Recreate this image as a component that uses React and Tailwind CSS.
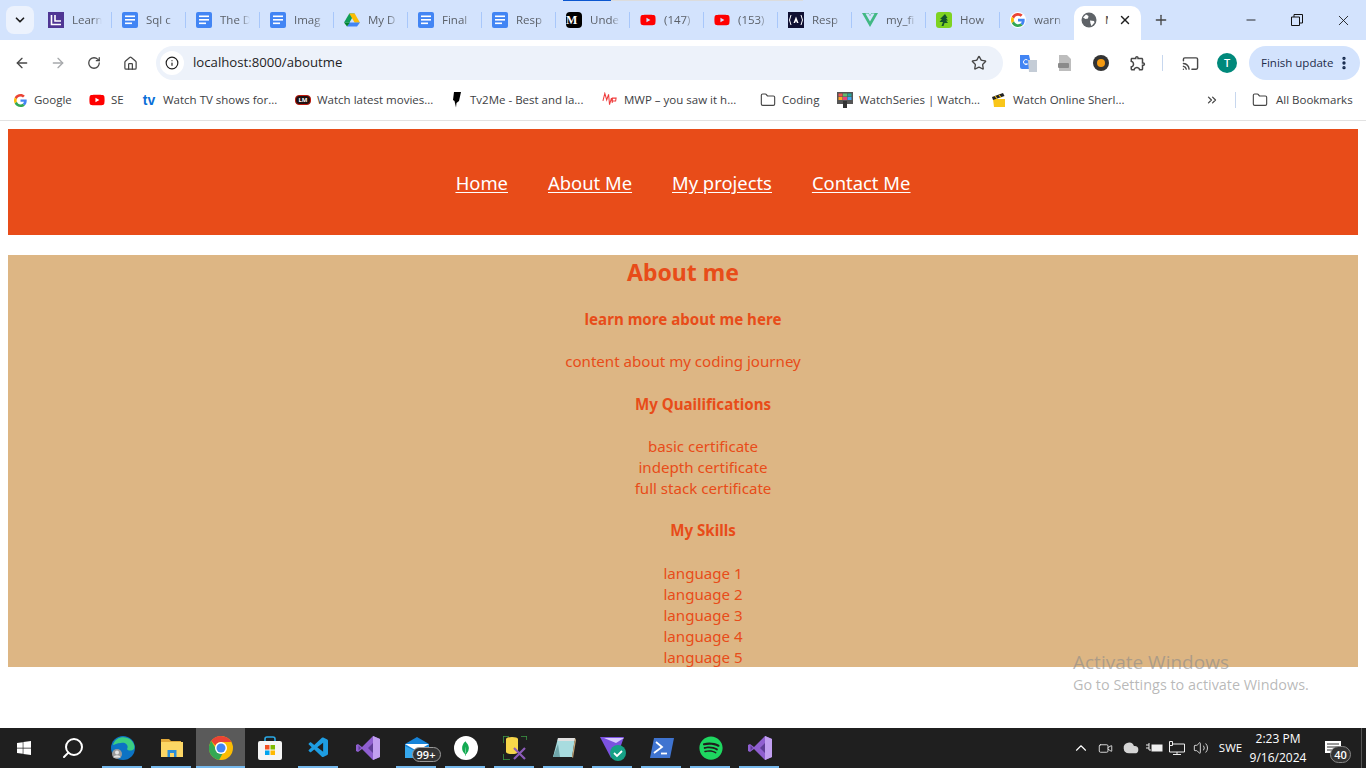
import React from "react";
import { ArrowLeft, ArrowRight, RotateCw, Home, Info, Star, Cast, X, Plus, Minus, ChevronDown, ChevronsRight, ChevronUp, Folder, MoreVertical, Search, Volume2, Video, Cloud } from "lucide-react";
import { FaYoutube, FaWindows, FaSpotify } from "react-icons/fa";
import { SiVuedotjs, SiMongodb } from "react-icons/si";
import { VscVscode } from "react-icons/vsc";

const ui = { fontFamily: '"Open Sans","Noto Sans",sans-serif' };
const page = { fontFamily: '"Noto Sans","Open Sans",sans-serif' };

const G = ({ s = 16 }) => (
  <svg width={s} height={s} viewBox="0 0 48 48" className="shrink-0">
    <path fill="#EA4335" d="M24 9.5c3.5 0 6.6 1.2 9.1 3.600l6.800-6.800C35.800 2.400 30.300 0 24 0 14.600 0 6.500 5.400 2.600 13.200l7.900 6.100C12.400 13.700 17.700 9.500 24 9.500z" />
    <path fill="#4285F4" d="M46.900 24.500c0-1.600-.1-3.100-.4-4.500H24v9h12.900c-.6 3-2.200 5.500-4.700 7.200l7.600 5.900c4.400-4.100 7.100-10.100 7.100-17.600z" />
    <path fill="#FBBC05" d="M10.500 28.700c-.5-1.400-.8-3-.8-4.700s.3-3.200.8-4.700l-7.900-6.100C.9 16.500 0 20.100 0 24s.9 7.500 2.600 10.800l7.900-6.100z" />
    <path fill="#34A853" d="M24 48c6.500 0 11.900-2.100 15.900-5.800l-7.600-5.900c-2.200 1.500-5 2.300-8.200 2.300-6.300 0-11.600-4.200-13.500-9.900l-7.900 6.100C6.500 42.600 14.600 48 24 48z" />
  </svg>
);
const Doc = () => (
  <svg width="16" height="16" viewBox="0 0 16 16" className="shrink-0">
    <rect width="16" height="16" rx="2" fill="#4285f4" />
    <rect x="3" y="3.500" width="10" height="1.600" fill="#fff" />
    <rect x="3" y="7" width="10" height="1.600" fill="#fff" />
    <rect x="3" y="10.500" width="7" height="1.600" fill="#fff" />
  </svg>
);
const Learn = () => (
  <svg width="16" height="16" viewBox="0 0 16 16" className="shrink-0">
    <rect width="16" height="16" fill="#4f3694" />
    <path d="M3.500 3v9.500H13M7 3v6h6" fill="none" stroke="#fff" strokeWidth="1.600" />
  </svg>
);
const Drive = () => (
  <svg width="16" height="16" viewBox="0 0 16 16" className="shrink-0">
    <path d="M5.300 1.500h5.400L5.500 10.500H0z" fill="#0f9d58" />
    <path d="M5.300 1.500h5.400l5.300 9.200h-5.300z" fill="#fbbc04" />
    <path d="M3 14.500h10l3-4H5.500z" fill="#4285f4" />
    <path d="M0 10.500l3 4 3-4z" fill="#00832d" />
  </svg>
);
const Medium = () => (
  <div className="w-4 h-4 shrink-0 rounded-sm bg-black text-white text-[12px] font-bold leading-4 overflow-hidden" style={{ fontFamily: '"Liberation Serif",serif' }}>M</div>
);
const Yt = () => <FaYoutube size={16} color="#ff0000" className="shrink-0" />;
const Auth = () => (
  <svg width="16" height="16" viewBox="0 0 16 16" className="shrink-0">
    <rect width="16" height="16" fill="#0f1033" />
    <path d="M3 3 1.500 8 3 13M13 3l1.500 5L13 13" fill="none" stroke="#fff" />
    <path d="M8 4.500 5.500 11h1.500L8 9l1 2h1.500z" fill="#fff" />
  </svg>
);
const Tree = () => (
  <svg width="16" height="16" viewBox="0 0 16 16" className="shrink-0">
    <rect width="16" height="16" rx="3" fill="#7ed321" />
    <path d="M9 2 4 7h2L3.500 10H7l-1.500 4h2l1-3h3.500l-2-2.500h2L10 6h1.500z" fill="#14532d" />
  </svg>
);
const Vue = () => <SiVuedotjs size={16} color="#41b883" className="shrink-0" />;
const GlobeIcon = () => (
  <svg width="16" height="16" viewBox="0 0 16 16" className="shrink-0">
    <circle cx="8" cy="8" r="7.500" fill="#5f6368" />
    <path d="M5 2.500 7.500 4 7 6.500 4.500 7 2 5.500zM9 8.500l4 .5.500 1.500-3 3.500-1-2.500z" fill="#fff" />
  </svg>
);

const tabs = [
  [Learn, "Learn"],
  [Doc, "Sql c"],
  [Doc, "The D"],
  [Doc, "Imag"],
  [Drive, "My D"],
  [Doc, "Final"],
  [Doc, "Resp"],
  [Medium, "Unde"],
  [Yt, "(147)"],
  [Yt, "(153)"],
  [Auth, "Resp"],
  [Vue, "my_fi"],
  [Tree, "How"],
  [() => <div className="w-4 h-4 shrink-0 rounded-full bg-white flex items-center justify-center"><G s={14} /></div>, "warn"],
];

const Tab = ({ Icon, label, last }) => (
  <div className="w-[74px] h-8 pl-2 flex items-center shrink-0 relative">
    <Icon />
    <span className="ml-2 w-[30px] overflow-hidden whitespace-nowrap text-[11.500px] text-[#5b6068]" style={{ maskImage: "linear-gradient(90deg,#000 70%,transparent)" }}>{label}</span>
    {!last && <div className="absolute right-[2px] top-[8px] w-[1px] h-[16px] bg-[#a8c7fa]" />}
  </div>
);

const Bm = ({ icon, label, w, wide }) => (
  <div className="flex items-center shrink-0 text-[11.500px] text-[#3c4043] whitespace-nowrap" style={{ width: w }}>
    <span className={`w-4 h-4 flex items-center justify-center shrink-0 ${wide ? "mr-2" : "mr-[6px]"}`}>{icon}</span>
    <span>{label}</span>
  </div>
);

const Tv = () => <span className="text-[#0a6fd8] font-black text-[14px] leading-4" style={{ fontFamily: '"Liberation Sans",sans-serif' }}>tv</span>;
const Lm = () => <span className="bg-[#201010] border border-[#c0180c] text-white text-[6px] font-bold px-[2px] rounded-sm leading-[8px]">LM</span>;
const Tv2 = () => <svg width="10" height="16" viewBox="0 0 10 16"><path d="M3 0h7L8 9 5.500 11 5 15.500 3.500 9 2 8z" fill="#000" /></svg>;
const Mwp = () => <svg width="17" height="16" viewBox="0 0 17 16"><path d="M1 9 3 1l2 7 2-6 1 11 2-7 1 5V6h4l-.5 3h-3" fill="none" stroke="#ef3b3b" strokeWidth="1.100" /></svg>;
const Ws = () => (
  <svg width="16" height="16" viewBox="0 0 16 16">
    <rect width="16" height="12" fill="#555" />
    <rect x="1.500" y="1.500" width="4" height="3" fill="#ef5350" />
    <rect x="6" y="1.500" width="4" height="3" fill="#66bb6a" />
    <rect x="10.500" y="1.500" width="4" height="3" fill="#26a69a" />
    <rect x="1.500" y="5" width="4" height="3" fill="#ffa726" />
    <rect x="6" y="5" width="4" height="3" fill="#ec407a" />
    <rect x="10.500" y="5" width="4" height="3" fill="#42a5f5" />
    <rect x="6" y="9" width="4" height="7" fill="#333" />
  </svg>
);
const Clap = () => (
  <svg width="14" height="15" viewBox="0 0 14 15">
    <path d="M1 6h12v8H2z" fill="#f9c61a" />
    <path d="M0 4 11 0l1.500 3L1 7z" fill="#222" />
    <path d="M3 3l2 2.500M7 2l2 2.500" stroke="#f9c61a" strokeWidth="1.200" />
  </svg>
);
const Ext = () => (
  <svg width="18" height="18" viewBox="0 0 24 24" className="shrink-0">
    <path fill="#474747" d="M10.500 4.500c.28 0 .5.22.5.5v2h6v6h2c.28 0 .5.22.5.5s-.22.5-.5.5h-2v6h-2.120c-.68-1.750-2.390-3-4.380-3s-3.700 1.250-4.380 3H4v-2.120c1.750-.68 3-2.390 3-4.380 0-1.990-1.240-3.700-2.990-4.380L4 7h6V5c0-.28.22-.5.5-.5m0-2C9.120 2.500 8 3.620 8 5H4c-1.100 0-1.990.9-1.990 2v3.800h.29c1.490 0 2.700 1.210 2.700 2.700s-1.210 2.700-2.700 2.700H2V20c0 1.100.9 2 2 2h3.800v-.3c0-1.490 1.210-2.700 2.700-2.700s2.700 1.210 2.700 2.700v.3H17c1.100 0 2-.9 2-2v-4c1.380 0 2.500-1.120 2.500-2.500S20.380 11 19 11V7c0-1.100-.9-2-2-2h-4c0-1.380-1.120-2.500-2.500-2.500z" />
  </svg>
);

const Task = ({ children, line, active }) => (
  <div className={`w-[49px] h-10 relative flex items-center justify-center shrink-0 ${active ? "bg-[#5a5a5a]" : ""}`}>
    {children}
    {line && <div className={`absolute bottom-0 h-[2px] bg-[#76b9ed] ${active ? "left-0 right-0" : "left-[4px] right-[5px]"}`} />}
  </div>
);

const Edge = () => (
  <svg width="24" height="24" viewBox="0 0 24 24">
    <circle cx="12" cy="12" r="12" fill="#0c73c4" />
    <path d="M2 9C4 1 14-1 20 4c3 3 4 6 3 9-2 2-6 2-7 0 2-3-1-7-6-6C6 7 3 9 2 9z" fill="#3bcf82" />
    <circle cx="6" cy="18" r="5" fill="#9a9a9a" />
    <circle cx="6" cy="16.500" r="2" fill="#e5e5e5" />
    <path d="M2.500 21.500c.5-3 6.500-3 7 0z" fill="#e5e5e5" />
  </svg>
);
const Files = () => (
  <svg width="22" height="20" viewBox="0 0 22 20">
    <path d="M0 1h8l2 2h10v15H0z" fill="#e2a93a" />
    <rect y="4" width="22" height="15" fill="#fcd665" />
    <rect x="6.500" y="12" width="9" height="7" fill="#2c8fd9" />
    <rect x="9" y="15" width="4" height="4" fill="#fcd665" />
  </svg>
);
const Chrome = () => (
  <svg width="24" height="24" viewBox="0 0 24 24">
    <circle cx="12" cy="12" r="12" fill="#fbbc04" />
    <path d="M12 0a12 12 0 0 1 10.400 6H12a6 6 0 0 0-5.500 3.600L2.200 5A12 12 0 0 1 12 0z" fill="#ea4335" />
    <path d="M2.200 5 8 14.500a6 6 0 0 0 5.500 3.300L10 24A12 12 0 0 1 2.200 5z" fill="#34a853" />
    <circle cx="12" cy="12" r="6" fill="#fff" />
    <circle cx="12" cy="12" r="4.500" fill="#4285f4" />
  </svg>
);
const Store = () => (
  <svg width="24" height="24" viewBox="0 0 24 24">
    <path d="M7 6V3a2 2 0 0 1 2-2h6a2 2 0 0 1 2 2v3" fill="none" stroke="#2aa9e6" strokeWidth="1.600" />
    <rect y="5" width="24" height="19" rx="2" fill="#f5f5f5" />
    <rect x="7" y="9" width="4.500" height="4.500" fill="#f25022" />
    <rect x="12.500" y="9" width="4.500" height="4.500" fill="#7fba00" />
    <rect x="7" y="14.500" width="4.500" height="4.500" fill="#00a4ef" />
    <rect x="12.500" y="14.500" width="4.500" height="4.500" fill="#ffb900" />
  </svg>
);
const Vs = () => (
  <svg width="24" height="24" viewBox="0 0 24 24">
    <path d="M17 0l7 3v18l-7 3L6 13l-4 3-2-1V9l2-1 4 3z" fill="#8f5fd0" />
    <path d="M17 0l7 3v18l-7 3z" fill="#c19ff0" />
    <path d="M17 7l-5 5 5 5zM2.500 9.500v5L5 12z" fill="#5e3d96" />
  </svg>
);
const Mail = () => (
  <div className="relative w-6 h-6">
    <svg width="24" height="24" viewBox="0 0 24 24">
      <path d="M0 8 12 1l12 7v14H0z" fill="#1683d8" />
      <path d="M0 8h24l-12 7z" fill="#fff" />
      <path d="M0 10l12 6 12-6v12H0z" fill="#36a8ee" />
    </svg>
    <div className="absolute left-[7px] top-[11px] w-[29px] h-[15px] rounded-full bg-[#333] border border-[#9a9a9a] text-white text-[11px] font-semibold leading-[13px] text-center">99+</div>
  </div>
);
const Mongo = () => (
  <div className="w-6 h-6 rounded-full bg-white flex items-center justify-center"><SiMongodb size={15} color="#13aa52" /></div>
);
const Db = () => (
  <svg width="24" height="24" viewBox="0 0 24 24">
    <path d="M0 7V0h6M18 0h6v4M0 18v6h7" fill="none" stroke="#3c9a45" strokeWidth="1.500" />
    <path d="M3 3a6 2 0 0 1 12 0v13a6 2 0 0 1-12 0z" fill="#f7d64a" />
    <path d="M11 12l11 11M22 12 11 23" stroke="#8c5bb8" strokeWidth="2.200" />
  </svg>
);
const Note = () => (
  <svg width="24" height="24" viewBox="0 0 24 24">
    <path d="M6 2h17l-3 19H1z" fill="#a8dcdf" />
    <path d="M6 2h17l-.500 3H5.500z" fill="#e0e0e0" />
    <path d="M20 21l3-19 1 2-3 18z" fill="#c8a878" />
    <path d="M1 21 6 8l2 13z" fill="#6fa6aa" />
  </svg>
);
const Prism = () => (
  <svg width="26" height="26" viewBox="0 0 26 26">
    <path d="M0 2h24L19 16 11 23z" fill="#7b52e0" />
    <path d="M4 3h20l-8 5z" fill="#d6c8ff" />
    <circle cx="18" cy="18" r="8" fill="#16a085" />
    <path d="M14 18l3 3 5-5" fill="none" stroke="#fff" strokeWidth="1.800" />
  </svg>
);
const Ps = () => (
  <svg width="24" height="20" viewBox="0 0 24 20">
    <path d="M4 0h20l-4 20H0z" fill="#3f74d0" />
    <path d="M6 4l6 5-8 6" fill="none" stroke="#fff" strokeWidth="1.800" />
    <path d="M11 15.500h6" stroke="#fff" strokeWidth="1.800" />
  </svg>
);

const Tray = ({ children, cls }) => <div className={`flex items-center justify-center shrink-0 ${cls}`}>{children}</div>;

const lines = ["basic certificate", "indepth certificate", "full stack certificate"];
const langs = ["language 1", "language 2", "language 3", "language 4", "language 5"];

export default function App() {
  return (
    <div className="w-[1366px] h-[768px] overflow-hidden bg-white relative flex flex-col" style={ui}>
      {/* tab strip */}
      <div className="h-10 shrink-0 bg-[#d3e3fd] flex items-end relative">
        <div className="h-[34px] self-start mt-[6px] w-10 shrink-0 flex items-start pl-[6px]">
          <div className="w-[28px] h-[28px] rounded-lg bg-[#ecf2fd] flex items-center justify-center">
            <ChevronDown size={14} strokeWidth={3} color="#1f1f1f" />
          </div>
        </div>
        <div className="flex self-start mt-[4px]">
          {tabs.map(([I, l], i) => <Tab key={i} Icon={I} label={l} last={i === 13} />)}
        </div>
        <div className="w-[67px] h-[34px] ml-[-1px] shrink-0 bg-white rounded-t-[10px] flex items-start pt-[6px] pl-[7px] -translate-x-[1px]">
          <GlobeIcon />
          <span className="ml-[8px] w-[3px] overflow-hidden text-[11.500px] leading-4 text-[#444]">M</span>
          <X size={14} strokeWidth={2.500} color="#1f1f1f" className="ml-[10px] mt-[1px]" />
        </div>
        <div className="self-center ml-[11px]"><Plus size={16} strokeWidth={2} color="#444" /></div>
        <div className="ml-auto flex self-start h-10 items-center">
          <div className="w-[46px] flex justify-center"><Minus size={14} color="#111" strokeWidth={1.500} /></div>
          <div className="w-[46px] flex justify-center relative">
            <svg width="12" height="12" viewBox="0 0 12 12"><path d="M.5 3h8v8.500h-8zM3 3V.5h8.500V9H9" fill="none" stroke="#111" /></svg>
          </div>
          <div className="w-[46px] flex justify-center"><X size={17} color="#111" strokeWidth={1.200} /></div>
        </div>
        <div className="absolute left-[563px] top-0 w-12 h-[1px] bg-[#0b57d0]" />
        <div className="absolute left-[611px] top-0 w-[192px] h-[1px] bg-[#dcdcdc]" />
      </div>

      {/* toolbar */}
      <div className="h-[44px] shrink-0 flex items-center bg-white pt-[2px]">
        <div className="w-11 flex justify-center"><ArrowLeft size={16} color="#474747" strokeWidth={2} /></div>
        <div className="w-[28px] flex justify-center"><ArrowRight size={16} color="#a7a9ac" strokeWidth={2} /></div>
        <div className="w-[44px] flex justify-center"><RotateCw size={14} color="#474747" strokeWidth={2.200} /></div>
        <div className="w-[28px] flex justify-center"><Home size={15} color="#474747" strokeWidth={2} /></div>
        <div className="ml-[12px] w-[847px] h-[34px] rounded-full bg-[#edf2fa] flex items-center pl-[4px]">
          <div className="w-6 h-6 rounded-full bg-white flex items-center justify-center"><Info size={14} color="#1f1f1f" strokeWidth={2} /></div>
          <span className="ml-[9px] text-[13.200px] text-[#1f1f1f]">localhost:8000/aboutme</span>
          <Star size={16} color="#474747" strokeWidth={2} className="ml-auto mr-[16px]" />
        </div>
        <div className="w-[17px]" />
        <svg width="17" height="17" viewBox="0 0 17 17" className="shrink-0">
          <path d="M0 0h9l3 14H2a2 2 0 0 1-2-2z" fill="#4285f4" />
          <path d="M8 5h9v12H9z" fill="#c4ccd6" />
          <path d="M7.500 5A2.500 2.500 0 1 0 7.500 9H5" fill="none" stroke="#fff" />
        </svg>
        <div className="w-[21px]" />
        <svg width="14" height="17" viewBox="0 0 14 17" className="shrink-0">
          <path d="M1 0h8l4 4v12H1z" fill="#bdbdbd" />
          <rect y="8" width="11" height="5" rx="1" fill="#8a8a8a" />
        </svg>
        <div className="w-[21px]" />
        <div className="w-4 h-4 rounded-full bg-[#333] flex items-center justify-center shrink-0">
          <div className="w-[8px] h-[8px] rounded-full bg-[#f59a11]" />
        </div>
        <div className="w-5" />
        <Ext />
        <div className="w-[15px]" />
        <div className="w-[1px] h-4 bg-[#c7d7ee] shrink-0" />
        <div className="w-[19px]" />
        <Cast size={17} color="#474747" strokeWidth={2} className="shrink-0" />
        <div className="w-[18px]" />
        <div className="w-5 h-5 rounded-full bg-[#00897b] text-white text-[11px] font-semibold flex items-center justify-center shrink-0">T</div>
        <div className="w-3" />
        <div className="w-[111px] h-[34px] rounded-full bg-[#d3e3fd] flex items-center pl-3 shrink-0">
          <span className="text-[11.500px] text-[#1e2c4a] whitespace-nowrap">Finish update</span>
          <MoreVertical size={16} color="#0f2347" strokeWidth={3} className="ml-auto mr-[8px]" />
        </div>
      </div>

      {/* bookmarks */}
      <div className="h-[37px] shrink-0 bg-white border-b border-[#e2e2e2] flex items-center pl-3 pb-[4px] relative">
        <Bm w={77} icon={<G s={13} />} label="Google" />
        <Bm w={52} icon={<FaYoutube size={16} color="#f00" />} label="SE" />
        <Bm w={154} icon={<Tv />} label="Watch TV shows for..." />
        <Bm w={153} icon={<Lm />} label="Watch latest movies..." />
        <Bm w={154} icon={<Tv2 />} label="Tv2Me - Best and la..." />
        <Bm w={158} icon={<Mwp />} label="MWP – you saw it h..." />
        <Bm w={77} icon={<Folder size={16} color="#474747" strokeWidth={1.700} />} label="Coding" />
        <Bm w={154} icon={<Ws />} label="WatchSeries | Watch..." />
        <Bm w={214} icon={<Clap />} label="Watch Online Sherl..." />
        <ChevronsRight size={14} color="#474747" strokeWidth={2.200} className="shrink-0" />
        <div className="w-[1px] h-4 bg-[#c7d7ee] ml-[16px] mr-[16px] shrink-0" />
        <Bm w={110} wide icon={<Folder size={16} color="#474747" strokeWidth={1.700} />} label="All Bookmarks" />
      </div>

      {/* page */}
      <div className="flex-1 min-h-0 px-2 pt-2 relative" style={page}>
        <nav className="h-[106px] pt-[2px] bg-[#e84c19] flex items-center justify-center gap-10 text-white text-[18.400px] underline underline-offset-2">
          <a>Home</a>
          <a>About Me</a>
          <a>My projects</a>
          <a>Contact Me</a>
        </nav>
        <main className="mt-5 h-[412px] bg-[#ddb684] text-[#e84c19] text-center text-[15.100px] leading-[21px]">
          <h1 className="text-[23px] font-bold leading-[32px] pt-[1px] box-content">About me</h1>
          <h3 className="font-bold mt-[21px]">learn more about me here</h3>
          <p className="mt-[21px]">content about my coding journey</p>
          <h3 className="font-bold mt-[22px] pl-10">My Quailifications</h3>
          <ul className="mt-[21px] pl-10">{lines.map((l) => <li key={l}>{l}</li>)}</ul>
          <h3 className="font-bold mt-[21px] pl-10">My Skills</h3>
          <ul className="mt-[22px] pl-10">{langs.map((l) => <li key={l}>{l}</li>)}</ul>
        </main>
      </div>

      {/* watermark */}
      <div className="absolute left-[1073px] top-[650px] text-[#8a8a8a]/60 pointer-events-none" style={ui}>
        <div className="text-[19px] leading-[25px]">Activate Windows</div>
        <div className="text-[14.400px] leading-[20px]">Go to Settings to activate Windows.</div>
      </div>

      {/* taskbar */}
      <div className="h-10 shrink-0 bg-[#1f1f1f] flex items-center">
        <div className="w-[48px] h-10 flex items-center justify-center shrink-0"><FaWindows size={16} color="#fff" /></div>
        <div className="w-[50px] h-10 flex items-center justify-center shrink-0"><Search size={24} color="#fff" strokeWidth={2} className="-scale-x-100" /></div>
        <Task line><Edge /></Task>
        <Task line><Files /></Task>
        <Task active line><Chrome /></Task>
        <Task><Store /></Task>
        <Task line><VscVscode size={24} color="#1e9de2" /></Task>
        <Task><Vs /></Task>
        <Task line><Mail /></Task>
        <Task line><Mongo /></Task>
        <Task line><Db /></Task>
        <Task line><Note /></Task>
        <Task line><Prism /></Task>
        <Task line><Ps /></Task>
        <Task line><FaSpotify size={24} color="#1ed760" /></Task>
        <Task line><Vs /></Task>
        <div className="ml-auto flex items-center h-10 text-white">
          <Tray cls="w-[18px]"><ChevronUp size={18} color="#fff" strokeWidth={1.500} /></Tray>
          <Tray cls="w-[20px] ml-[5px]"><Video size={15} color="#ddd" strokeWidth={1.500} /></Tray>
          <Tray cls="w-[24px] ml-[4px]"><Cloud size={16} color="#d5d5d5" fill="#d5d5d5" /></Tray>
          <Tray cls="w-[22px]">
            <svg width="17" height="12" viewBox="0 0 17 12"><path d="M0 3h3M0 6h3M3 1v7h2" stroke="#eee" fill="none" /><rect x="5.500" y="2.500" width="11" height="7" fill="#eee" /></svg>
          </Tray>
          <Tray cls="w-[24px]">
            <svg width="16" height="14" viewBox="0 0 16 14"><path d="M4 3h11.500v8H.5V.5h3v4h-3M8 11v2.500M4 13.500h8" fill="none" stroke="#eee" /></svg>
          </Tray>
          <Tray cls="w-[24px]"><Volume2 size={16} color="#eee" strokeWidth={1.300} /></Tray>
          <div className="w-[35px] text-center text-[11.500px] text-white" >SWE</div>
          <div className="w-[60px] text-center text-[12px] leading-[19px] text-white">
            <div>2:23 PM</div>
            <div>9/16/2024</div>
          </div>
          <div className="w-[53px] relative h-10 flex items-center pl-[17px]">
            <svg width="16" height="14" viewBox="0 0 16 14"><path d="M0 0h16v12H0z" fill="#fff" /><path d="M2 3h12M2 6h12M2 9h8" stroke="#333" /></svg>
            <div className="absolute left-[22px] top-[18px] w-[21px] h-[17px] rounded-full bg-[#333] border border-[#888] text-white text-[11px] font-semibold leading-[15px] text-center">40</div>
          </div>
          <div className="w-[5px] h-10 border-l border-[#555]" />
        </div>
      </div>
    </div>
  );
}
